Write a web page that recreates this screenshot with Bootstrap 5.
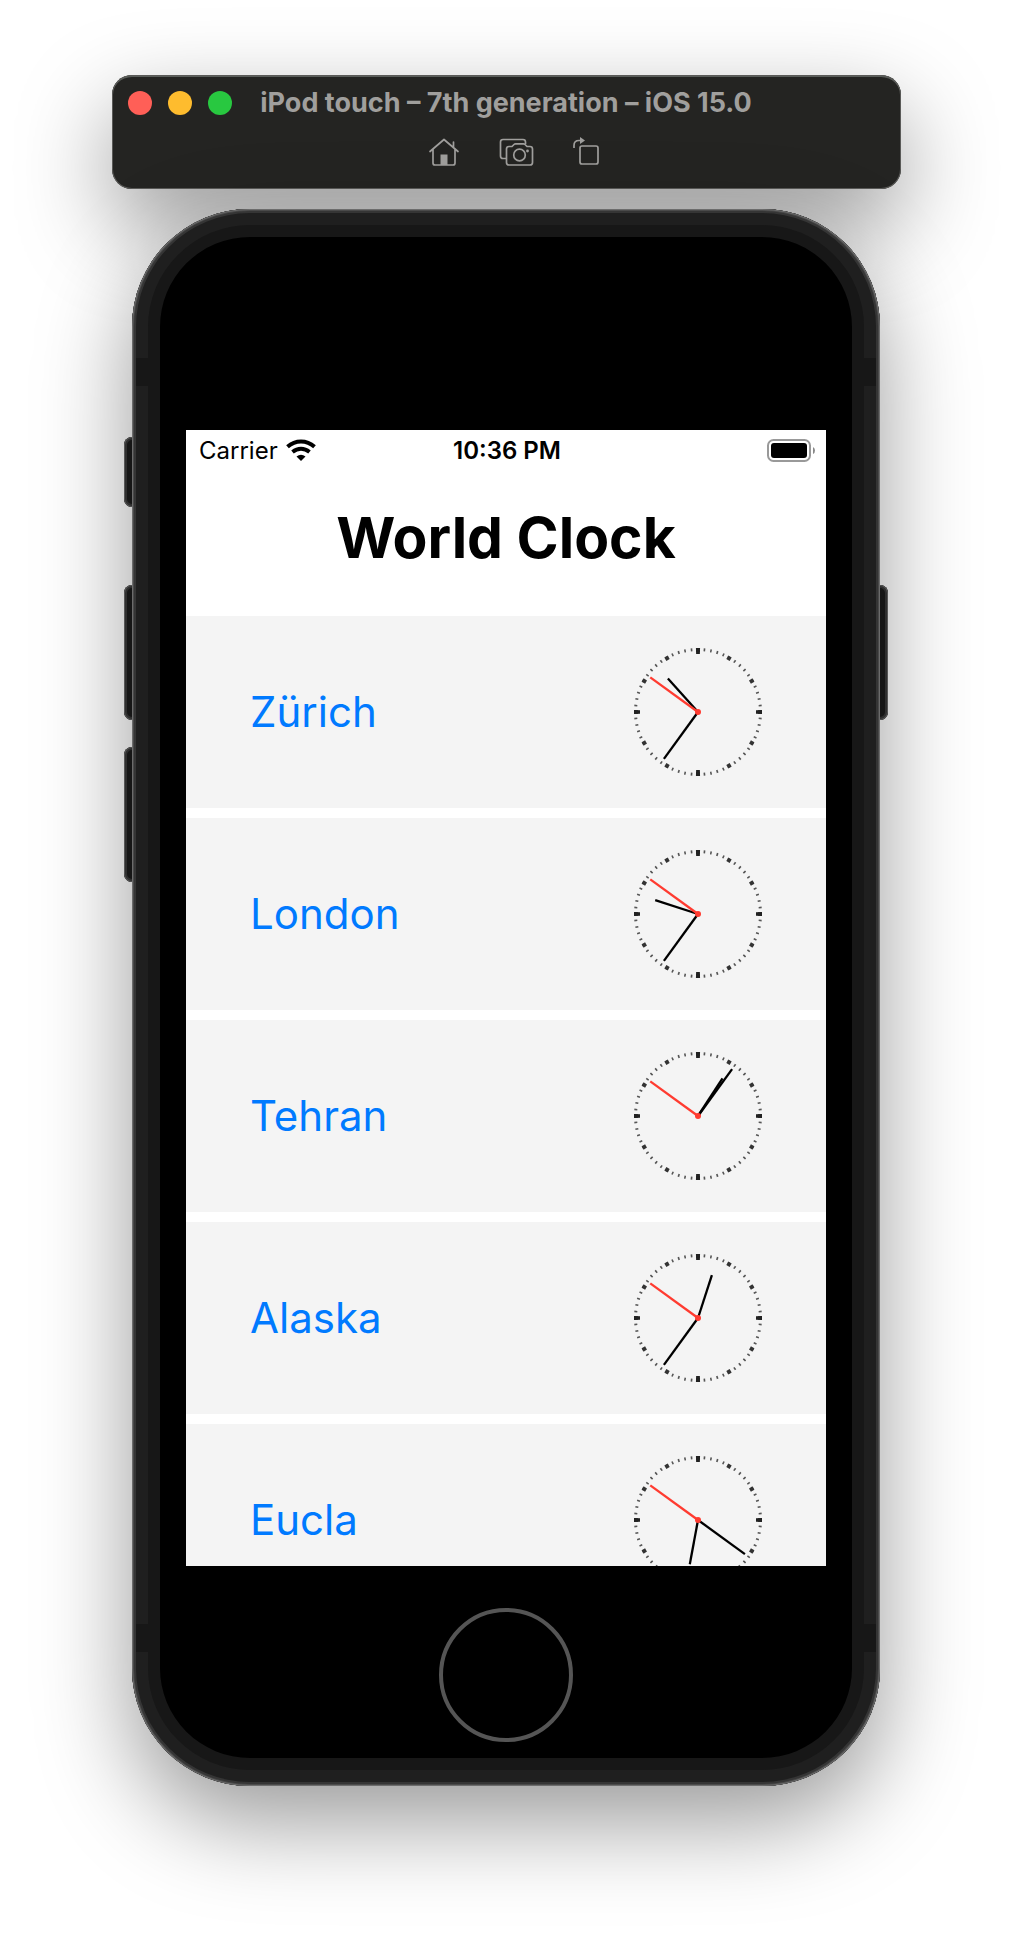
<!DOCTYPE html>
<html lang="en">
<head>
<meta charset="utf-8">
<meta name="viewport" content="width=device-width, initial-scale=1">
<title>World Clock</title>
<link rel="stylesheet" href="https://cdn.jsdelivr.net/npm/bootstrap@5.3.0/dist/css/bootstrap.min.css">
<style>
  body { font-family: Inter, "Liberation Sans", sans-serif; background: #fff; overflow-x: hidden; }
  .stage { padding: 75px 16px 150px; }

  /* simulator window bar */
  .sim-bar {
    max-width: 789px; height: 114px; padding: 12px 16px 0; border-radius: 20px;
    background: #242422; color: #a09f9d;
    box-shadow: inset 0 0 0 1px #5a5a58, inset 0 2px 0 #5a5e5a, 0 36px 94px rgba(0,0,0,.4);
  }
  .sim-title { font-size: 27px; line-height: 32px; font-weight: 700; }
  .light { width: 24px; height: 24px; border-radius: 50%; border: 0; padding: 0; }
  .light-close { background: #ff5f57; }
  .light-min { background: #febc2e; }
  .light-zoom { background: #28c840; }
  .sim-tools { gap: 38px; margin-top: 17px; padding-left: 18px; }
  .tool { border: 0; padding: 0; background: none; color: inherit; line-height: 0; }

  /* device body */
  .device { max-width: 748px; margin-top: 20px; border-radius: 118px; box-shadow: 0 36px 94px rgba(0,0,0,.4); }
  .shell {
    position: relative; border-radius: 118px; background: #000; padding: 221px 54px 44px;
    box-shadow: inset 0 0 0 1px #6c6c6c, inset 0 0 0 2px #4a4a4a, inset 0 0 0 4px #353535,
      inset 0 0 0 16px #1f1f1f, inset 0 0 0 28px #171717;
  }
  .side-key {
    position: absolute; z-index: -1; width: 18px; left: -8px; border-radius: 8px; background: #1c1c1c;
    box-shadow: inset 0 0 0 1px #6a6a6a, inset 0 0 0 3px #3a3a3a;
  }
  .key-mute { top: 228px; height: 70px; }
  .key-up { top: 376px; height: 135px; }
  .key-down { top: 538px; height: 135px; }
  .key-power { top: 376px; height: 135px; left: auto; right: -8px; }
  .band { position: absolute; width: 12px; height: 28px; background: #171717; }
  .band-tl { left: 4px; top: 149px; }
  .band-tr { right: 4px; top: 149px; }
  .band-bl { left: 4px; bottom: 134px; }
  .band-br { right: 4px; bottom: 134px; }
  .home-key { width: 134px; height: 134px; margin-top: 42px; border: 4px solid #555; border-radius: 50%; background: #000; padding: 0; }

  /* app screen */
  .screen { aspect-ratio: 640 / 1136; overflow: hidden; background: #fff; color: #000; }
  .status { padding: 0 11px 0 13px; height: 42px; font-size: 24px; line-height: 42px; }
  .app-title { font-size: 57px; line-height: 64px; font-weight: 700; margin: 34px 0 46px; }
  .zones { gap: 10px; }
  .zone { height: 192px; flex: none; padding: 0 64px; background: #f4f4f4; color: #007aff; font-size: 42px; line-height: 52px; }
  .zone:hover { color: #0062cc; }
</style>
<script src="https://cdn.jsdelivr.net/npm/bootstrap@5.3.0/dist/js/bootstrap.bundle.min.js"></script>
</head>
<body>
<svg class="d-none" aria-hidden="true">
  <symbol id="face" viewBox="-64 -64 128 128">
    <g fill="none" transform="rotate(-90)">
      <circle r="62.5" stroke="#555" stroke-width="3" pathLength="360" stroke-dasharray="1.5 4.5" stroke-dashoffset=".75"/>
      <circle r="62" stroke="#333" stroke-width="4" pathLength="360" stroke-dasharray="3.6 26.4" stroke-dashoffset="1.8"/>
      <circle r="61" stroke="#222" stroke-width="6" pathLength="360" stroke-dasharray="3.8 86.2" stroke-dashoffset="1.9"/>
    </g>
  </symbol>
  <symbol id="second" viewBox="-64 -64 128 128">
    <path d="M0 0V-59" transform="rotate(306)" stroke="#ff3b30" stroke-width="2.3"/>
    <circle r="3" fill="#ff3b30"/>
  </symbol>
</svg>

<main class="stage d-flex flex-column align-items-center">
  <header class="sim-bar w-100">
    <div class="row g-0 align-items-center">
      <div class="col d-flex gap-3">
        <button class="light light-close" type="button" aria-label="Close"></button>
        <button class="light light-min" type="button" aria-label="Minimize"></button>
        <button class="light light-zoom" type="button" aria-label="Zoom"></button>
      </div>
      <div class="col-auto sim-title">iPod touch – 7th generation – iOS 15.0</div>
      <div class="col"></div>
    </div>
    <div class="sim-tools d-flex justify-content-center">
      <button class="tool" type="button" aria-label="Home">
        <svg width="32" height="32" viewBox="0 0 32 32" fill="none" stroke="currentColor" stroke-width="1.7" stroke-linejoin="round" stroke-linecap="round">
          <path d="M2 15.500 16 3.500 30 15.500M5 13.500V27q0 2 2 2H25q2 0 2-2V13.500M25.500 11V6"/>
          <path d="M12.500 18.500h7V29h-7z" fill="currentColor" stroke="none"/>
        </svg>
      </button>
      <button class="tool" type="button" aria-label="Screenshot">
        <svg width="36" height="32" viewBox="0 0 36 32" fill="none" stroke="currentColor" stroke-width="1.700" stroke-linejoin="round">
          <path d="M8.500 22.500H5q-2.500 0-2.500-2.500V6q0-2.500 2.500-2.500H25q2.500 0 2.500 2.500v2"/>
          <path d="M11 10.500h3l2-2q.7-.7 1.500-.7h8q.8 0 1.500.7l2 2h3q2.500 0 2.500 2.500V26.500q0 2.500-2.500 2.500H11q-2.500 0-2.500-2.500V13q0-2.500 2.500-2.500z"/>
          <circle cx="21.500" cy="19" r="5.800"/><circle cx="29.500" cy="15" r="1.400" fill="currentColor" stroke="none"/>
        </svg>
      </button>
      <button class="tool" type="button" aria-label="Rotate">
        <svg width="30" height="32" viewBox="0 0 30 32" fill="none" stroke="currentColor" stroke-width="1.700">
          <rect x="8" y="10" width="18" height="18" rx="2"/>
          <path d="M2 12V9.500Q2 4.500 7 4.500H9"/>
          <path d="M8 1v7l5-3.500z" fill="currentColor" stroke="none"/>
        </svg>
      </button>
    </div>
  </header>

  <div class="device w-100 position-relative">
    <span class="side-key key-mute"></span><span class="side-key key-up"></span><span class="side-key key-down"></span><span class="side-key key-power"></span>
    <div class="shell d-flex flex-column align-items-center">
      <span class="band band-tl"></span><span class="band band-tr"></span><span class="band band-bl"></span><span class="band band-br"></span>

      <section class="screen w-100 d-flex flex-column">
        <div class="status row g-0 flex-nowrap flex-shrink-0">
          <div class="col d-flex align-items-center gap-2">
            <span>Carrier</span>
            <svg width="30" height="24" viewBox="1 1 30 24" fill="none" stroke="#000" stroke-width="4" role="img" aria-label="Wi-Fi">
              <path d="M2.500 8.800Q8.500 3.500 16 3.500T29.500 8.800"/><path d="M7.500 14Q11.500 10.800 16 10.800T24.500 14"/>
              <path d="M11.500 18.600Q16 14.700 20.500 18.600L16 23z" fill="#000" stroke="none"/>
            </svg>
          </div>
          <div class="col-auto fw-semibold">10:36 PM</div>
          <div class="col d-flex align-items-center justify-content-end">
            <svg width="48" height="24" viewBox="0 1 48 24" role="img" aria-label="Battery full">
              <rect x="1" y="2" width="42" height="21" rx="5.500" fill="none" stroke="#999" stroke-width="2"/>
              <rect x="4" y="5" width="36" height="15" rx="3"/>
              <path d="M46 9q2 1 2 3.500T46 16z" fill="#888"/>
            </svg>
          </div>
        </div>
        <h1 class="app-title text-center">World Clock</h1>
        <nav class="zones d-flex flex-column" aria-label="Time zones">
          <a class="zone d-flex align-items-center justify-content-between text-decoration-none" href="#zurich">Zürich
            <svg width="128" height="128" viewBox="-64 -64 128 128" stroke="#000" stroke-width="2.3" role="img" aria-label="10:36"><use href="#face" x="-64" y="-64" width="128" height="128"/><path d="M0 0V-45" transform="rotate(318)"/><path d="M0 0V-58" transform="rotate(216)"/><use href="#second" x="-64" y="-64" width="128" height="128" stroke="none"/></svg></a>
          <a class="zone d-flex align-items-center justify-content-between text-decoration-none" href="#london">London
            <svg width="128" height="128" viewBox="-64 -64 128 128" stroke="#000" stroke-width="2.3" role="img" aria-label="9:36"><use href="#face" x="-64" y="-64" width="128" height="128"/><path d="M0 0V-45" transform="rotate(288)"/><path d="M0 0V-58" transform="rotate(216)"/><use href="#second" x="-64" y="-64" width="128" height="128" stroke="none"/></svg></a>
          <a class="zone d-flex align-items-center justify-content-between text-decoration-none" href="#tehran">Tehran
            <svg width="128" height="128" viewBox="-64 -64 128 128" stroke="#000" stroke-width="2.3" role="img" aria-label="1:06"><use href="#face" x="-64" y="-64" width="128" height="128"/><path d="M0 0V-45" transform="rotate(33)"/><path d="M0 0V-58" transform="rotate(36)"/><use href="#second" x="-64" y="-64" width="128" height="128" stroke="none"/></svg></a>
          <a class="zone d-flex align-items-center justify-content-between text-decoration-none" href="#alaska">Alaska
            <svg width="128" height="128" viewBox="-64 -64 128 128" stroke="#000" stroke-width="2.3" role="img" aria-label="12:36"><use href="#face" x="-64" y="-64" width="128" height="128"/><path d="M0 0V-45" transform="rotate(18)"/><path d="M0 0V-58" transform="rotate(216)"/><use href="#second" x="-64" y="-64" width="128" height="128" stroke="none"/></svg></a>
          <a class="zone d-flex align-items-center justify-content-between text-decoration-none" href="#eucla">Eucla
            <svg width="128" height="128" viewBox="-64 -64 128 128" stroke="#000" stroke-width="2.3" role="img" aria-label="6:21"><use href="#face" x="-64" y="-64" width="128" height="128"/><path d="M0 0V-45" transform="rotate(190.500)"/><path d="M0 0V-58" transform="rotate(126)"/><use href="#second" x="-64" y="-64" width="128" height="128" stroke="none"/></svg></a>
        </nav>
      </section>

      <button class="home-key" type="button" aria-label="Home button"></button>
    </div>
  </div>
</main>
</body>
</html>
